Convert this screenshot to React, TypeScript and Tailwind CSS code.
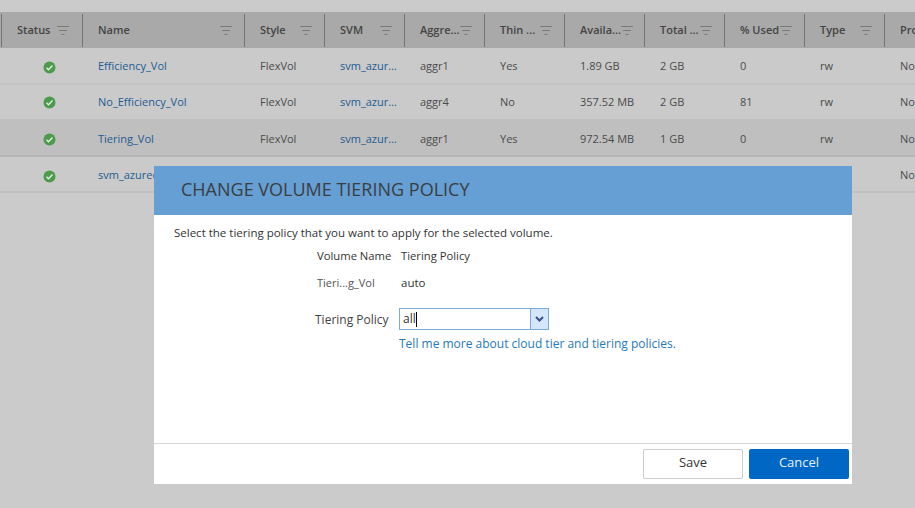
import React from 'react';

const columns = [
  { label: 'Status', w: 'w-[81px] pr-[13px]' },
  { label: 'Name', w: 'w-[162px] pr-[12px]' },
  { label: 'Style', w: 'w-[80px] pr-[12px]' },
  { label: 'SVM', w: 'w-[80px] pr-[12px]' },
  { label: 'Aggre...', w: 'w-[80px] pr-[12px]' },
  { label: 'Thin ...', w: 'w-[80px] pr-[12px]' },
  { label: 'Availa...', w: 'w-[80px] pr-[12px]' },
  { label: 'Total ...', w: 'w-[80px] pr-[12px]' },
  { label: '% Used', w: 'w-[80px] pr-[12px]' },
  { label: 'Type', w: 'w-[80px] pr-[12px]' },
  { label: 'Pro', w: 'w-[80px] pr-[12px]' },
];

const rows = [
  { h: 'h-[37px] pt-[2px]', icon: 'mt-[2px]', bg: 'bg-[#cacaca]', border: 'border-[#c3c3c3]', name: 'Efficiency_Vol', aggr: 'aggr1', thin: 'Yes', avail: '1.89 GB', total: '2 GB', used: '0', hidden: false },
  { h: 'h-[34px] pt-[3px]', icon: '', bg: 'bg-[#cacaca]', border: 'border-[#cacaca]', name: 'No_Efficiency_Vol', aggr: 'aggr4', thin: 'No', avail: '357.52 MB', total: '2 GB', used: '81', hidden: false },
  { h: 'h-[38px] pt-[4px]', icon: '', bg: 'bg-[#bfbfbf]', border: 'border-[#b4b4b4]', name: 'Tiering_Vol', aggr: 'aggr1', thin: 'Yes', avail: '972.54 MB', total: '1 GB', used: '0', hidden: false },
  { h: 'h-[36px] pt-[2px]', icon: 'mt-[2px]', bg: 'bg-[#cacaca]', border: 'border-[#c0c0c0]', name: 'svm_azured', aggr: '', thin: '', avail: '', total: '', used: '', hidden: true },
];

const FilterIcon = () => (
  <svg width="12" height="9" viewBox="0 0 12 9" className="shrink-0 mt-[1px]">
    <rect x="0" y="0" width="12" height="1" fill="#7a7a7a" />
    <rect x="2" y="4" width="8" height="1" fill="#7a7a7a" />
    <rect x="4.5" y="8" width="3" height="1" fill="#7a7a7a" />
  </svg>
);

const StatusIcon = () => (
  <svg width="13" height="13" viewBox="0 0 13 13">
    <circle cx="6.5" cy="6.5" r="6" fill="#4c9a4c" />
    <path d="M3.5 6.8 L5.5 8.7 L9.5 4.6" fill="none" stroke="#e4efe4" strokeWidth="1.4" />
  </svg>
);

const Cell = ({ w, children, link }: { w: string; children?: React.ReactNode; link?: boolean }) => (
  <div className={`${w} shrink-0 pl-[16px] truncate ${link ? 'text-[#1d5c92]' : 'text-[#4b4b4b]'}`}>{children}</div>
);

const App: React.FC = () => {
  return (
    <div className="relative w-[915px] h-[508px] overflow-hidden bg-[#cbcbcb] text-[11px] font-['Open_Sans',sans-serif]">
      <div className="pt-[12px] w-[1000px]">
        {/* Table header */}
        <div className="flex h-[36px] bg-[#a9a9a9] pl-[1px] items-center">
          {columns.map((c) => (
            <div key={c.label} className={`${c.w} shrink-0 h-[33px] border-l border-[#747474] flex items-center justify-between pl-[15px] font-semibold text-[#444444]`}>
              <span className="whitespace-nowrap">{c.label}</span>
              <FilterIcon />
            </div>
          ))}
        </div>

        {/* Rows */}
        {rows.map((r) => (
          <div key={r.name} className={`flex items-center pl-[1px] border-b-2 ${r.h} ${r.bg} ${r.border}`}>
            <div className={`w-[81px] shrink-0 flex justify-center pl-[16px] ${r.icon}`}>
              <StatusIcon />
            </div>
            <Cell w="w-[162px]" link>{r.name}</Cell>
            {r.hidden ? (
              <div className="w-[640px] shrink-0" />
            ) : (
              <>
                <Cell w="w-[80px]">FlexVol</Cell>
                <Cell w="w-[80px]" link>
                  <span className="block w-[58px] truncate">svm_azure_01</span>
                </Cell>
                <Cell w="w-[80px]">{r.aggr}</Cell>
                <Cell w="w-[80px]">{r.thin}</Cell>
                <Cell w="w-[80px]">{r.avail}</Cell>
                <Cell w="w-[80px]">{r.total}</Cell>
                <Cell w="w-[80px]">{r.used}</Cell>
                <Cell w="w-[80px]">rw</Cell>
              </>
            )}
            <Cell w="w-[80px]">None</Cell>
          </div>
        ))}
      </div>

      {/* Modal */}
      <div className="absolute left-[154px] top-[166px] w-[698px] h-[318px] bg-white flex flex-col">
        <div className="h-[49px] shrink-0 bg-[#659fd3] flex items-center pl-[27px] pb-[2px] text-[18px] font-normal text-[#3a3e42]">
          CHANGE VOLUME TIERING POLICY
        </div>
        <div className="flex-1 pl-[20px] pt-[10px] text-[12px] text-[#333333]">
          <p className="text-[11.5px] leading-[16px]">Select the tiering policy that you want to apply for the selected volume.</p>
          <div className="flex mt-[6px] ml-[143px] h-[18px] items-center text-[11.25px]">
            <span className="w-[84px]">Volume Name</span>
            <span>Tiering Policy</span>
          </div>
          <div className="flex mt-[9px] ml-[143px] h-[18px] items-center">
            <span className="w-[84px] text-[11px] text-[#555555]">Tieri...g_Vol</span>
            <span className="text-[11.5px]">auto</span>
          </div>
          <div className="flex mt-[16px] ml-[141px] items-center">
            <span className="w-[84px] pt-[2px] text-[#444444]">Tiering Policy</span>
            <div className="w-[150px] h-[22px] border border-[#7eaad6] flex">
              <div className="flex-1 pl-[3px] flex items-center">
                all<span className="w-px h-[15px] bg-black" />
              </div>
              <div className="w-[18px] border-l border-[#7eaad6] bg-[#d3e6fb] flex items-center justify-center">
                <svg width="9" height="6" viewBox="0 0 9 6">
                  <path d="M1 1 L4.5 4.5 L8 1" fill="none" stroke="#34538a" strokeWidth="2" />
                </svg>
              </div>
            </div>
          </div>
          <p className="mt-[5px] ml-[225px] text-[#2679b9]">Tell me more about cloud tier and tiering policies.</p>
        </div>
        <div className="h-[41px] shrink-0 border-t border-[#d8d8d8] flex justify-end items-center pr-[3px] gap-[6px] text-[13px]">
          <button className="w-[100px] h-[30px] pb-[2px] border border-[#cccccc] rounded-[2px] bg-white text-[#333333]">Save</button>
          <button className="w-[100px] h-[30px] pb-[2px] rounded-[2px] bg-[#0067c5] text-[#e8f1fa]">Cancel</button>
        </div>
      </div>
    </div>
  );
};

export default App;
